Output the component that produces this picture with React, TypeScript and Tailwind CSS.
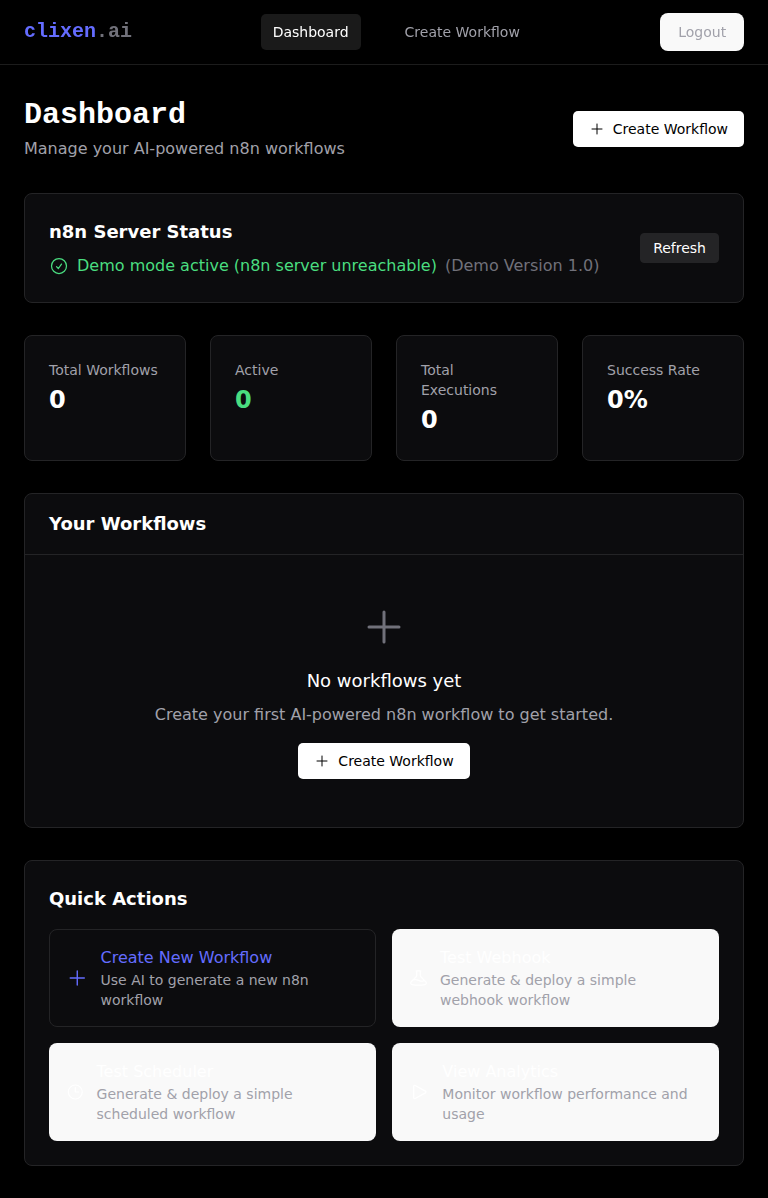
import type { ReactNode } from "react";

const paths = {
  plus: "M12 4.5v15m7.5-7.5h-15",
  check: "M9 12.75L11.25 15 15 9.75M21 12a9 9 0 11-18 0 9 9 0 0118 0z",
  beaker:
    "M9.75 3.104v5.714a2.25 2.25 0 01-.659 1.591L5 14.5M9.75 3.104c-.251.023-.501.05-.75.082m.75-.082a24.301 24.301 0 014.5 0m0 0v5.714c0 .597.237 1.17.659 1.591L19.8 15.3M14.25 3.104c.251.023.501.05.75.082M19.8 15.3l-1.57.393A9.065 9.065 0 0112 15a9.065 9.065 0 00-6.23-.693L5 14.5m14.8.8l1.402 1.402c1.232 1.232.65 3.318-1.067 3.611A48.309 48.309 0 0112 21c-2.773 0-5.491-.235-8.135-.687-1.718-.293-2.3-2.379-1.067-3.61L5 14.5",
  clock: "M12 6v6h4.5m4.5 0a9 9 0 11-18 0 9 9 0 0118 0z",
  play: "M5.25 5.653c0-.856.917-1.398 1.667-.986l11.54 6.348a1.125 1.125 0 010 1.971l-11.54 6.347a1.125 1.125 0 01-1.667-.985V5.653z",
};

function Icon({ name, className }: { name: keyof typeof paths; className: string }) {
  return (
    <svg className={className} fill="none" viewBox="0 0 24 24" strokeWidth={1.5} stroke="currentColor" aria-hidden="true">
      <path strokeLinecap="round" strokeLinejoin="round" d={paths[name]} />
    </svg>
  );
}

function Card({ className = "", children }: { className?: string; children: ReactNode }) {
  return <section className={`rounded-lg border border-[#242426] bg-[#0c0c0e] ${className}`}>{children}</section>;
}

function CreateButton() {
  return (
    <button className="inline-flex items-center rounded-[5px] bg-white px-4 py-2 text-sm font-medium text-black">
      <Icon name="plus" className="mr-2 h-4 w-4" />
      Create Workflow
    </button>
  );
}

const stats = [
  { label: "Total Workflows", value: "0", color: "text-white" },
  { label: "Active", value: "0", color: "text-[#4ade80]" },
  { label: "Total Executions", value: "0", color: "text-white" },
  { label: "Success Rate", value: "0%", color: "text-white" },
];

const actions: { icon: keyof typeof paths; title: string; text: string; box: string; color: string }[] = [
  { icon: "plus", title: "Create New Workflow", text: "Use AI to generate a new n8n workflow", box: "border-[#242426]", color: "text-[#646cff]" },
  { icon: "beaker", title: "Test Webhook", text: "Generate & deploy a simple webhook workflow", box: "border-transparent bg-[#f9f9f9]", color: "text-white" },
  { icon: "clock", title: "Test Scheduler", text: "Generate & deploy a simple scheduled workflow", box: "border-transparent bg-[#f9f9f9]", color: "text-white" },
  { icon: "play", title: "View Analytics", text: "Monitor workflow performance and usage", box: "border-transparent bg-[#f9f9f9]", color: "text-white" },
];

export default function App() {
  return (
    <div className="min-h-screen bg-black font-['DejaVu_Sans',sans-serif] text-white">
      <header className="sticky top-0 z-10 border-b border-[#1c1c1c] bg-black/80 backdrop-blur-md">
        <div className="flex h-16 items-center justify-between px-6">
          <div className="font-['Liberation_Mono',monospace] text-xl font-bold text-[#646cff]">
            clixen<span className="text-[#71717a]">.ai</span>
          </div>
          <nav className="flex gap-8 text-sm">
            <a className="rounded-[5px] bg-[#1a1a1a] px-3 py-2 text-white">Dashboard</a>
            <a className="rounded-[5px] px-3 py-2 text-[#a1a1aa]">Create Workflow</a>
          </nav>
          <button className="rounded-lg border border-transparent bg-[#f9f9f9] px-[1.2em] py-[0.6em] text-sm text-[#a1a1aa]">
            Logout
          </button>
        </div>
      </header>

      <main className="px-6 py-8">
        <div className="mb-8 flex items-center justify-between">
          <div>
            <h1 className="font-['Liberation_Mono',monospace] text-3xl font-bold">Dashboard</h1>
            <p className="mt-1 text-[#a1a1aa]">Manage your AI-powered n8n workflows</p>
          </div>
          <CreateButton />
        </div>

        <Card className="mb-8 flex items-center justify-between p-6">
          <div>
            <h2 className="mb-2 text-lg font-bold">n8n Server Status</h2>
            <div className="flex items-center text-[#4ade80]">
              <Icon name="check" className="mr-2 h-5 w-5" />
              <span>Demo mode active (n8n server unreachable)</span>
              <span className="ml-2 text-[#71717a]">(Demo Version 1.0)</span>
            </div>
          </div>
          <button className="rounded border border-[#242426] bg-[#242426] px-3 py-1 text-sm text-white">Refresh</button>
        </Card>

        <div className="mb-8 grid grid-cols-4 gap-6">
          {stats.map((s) => (
            <Card key={s.label} className="p-6">
              <h3 className="text-sm text-[#a1a1aa]">{s.label}</h3>
              <p className={`mt-1 text-2xl font-bold ${s.color}`}>{s.value}</p>
            </Card>
          ))}
        </div>

        <Card className="mb-8">
          <div className="border-b border-[#242426] px-6 py-4">
            <h2 className="text-lg font-bold">Your Workflows</h2>
          </div>
          <div className="flex flex-col items-center p-12 text-center">
            <Icon name="plus" className="mb-4 h-12 w-12 text-[#71717a]" />
            <h3 className="mb-2 text-lg">No workflows yet</h3>
            <p className="mb-4 text-[#a1a1aa]">Create your first AI-powered n8n workflow to get started.</p>
            <CreateButton />
          </div>
        </Card>

        <Card className="p-6">
          <h2 className="mb-4 text-lg font-bold">Quick Actions</h2>
          <div className="grid grid-cols-2 gap-4">
            {actions.map((a) => (
              <button key={a.title} className={`flex items-center rounded-lg border p-4 text-left ${a.box}`}>
                <Icon name={a.icon} className={`mr-3 h-6 w-6 ${a.color}`} />
                <div>
                  <div className={a.color}>{a.title}</div>
                  <div className="text-sm text-[#a1a1aa]">{a.text}</div>
                </div>
              </button>
            ))}
          </div>
        </Card>
      </main>
    </div>
  );
}
